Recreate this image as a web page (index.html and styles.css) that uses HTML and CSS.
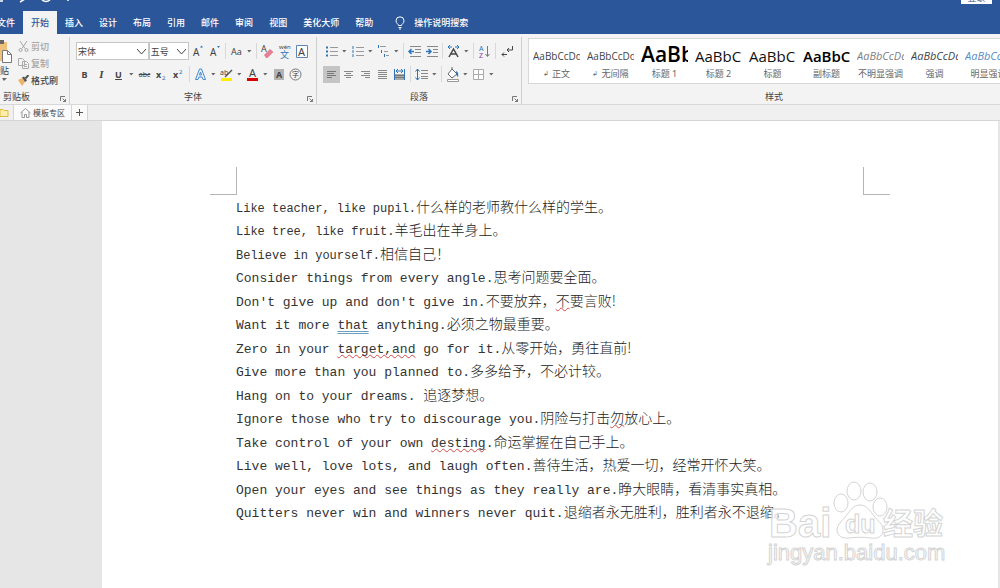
FILE: index.html
```
<!DOCTYPE html>
<html lang="zh-CN">
<head>
    <meta charset="UTF-8">
    <meta name="viewport" content="width=device-width, initial-scale=1.0">
    <title>Word</title>
    <link rel="stylesheet" href="styles.css">
</head>
<body>
    <header class="header">
        <div class="title-bar">
            <svg width="80" height="4" viewBox="0 0 80 4" fill="none" stroke="#fff" stroke-width="2">
                <path d="M0 1h3M20 2l5-3M42 0q4 3 8 0M67 0h2" stroke-width="1.500"/>
            </svg>
            <button class="login">登录</button>
        </div>
        <nav class="tabs">
            <button class="tab">文件</button>
            <button class="tab active">开始</button>
            <button class="tab">插入</button>
            <button class="tab">设计</button>
            <button class="tab">布局</button>
            <button class="tab">引用</button>
            <button class="tab">邮件</button>
            <button class="tab">审阅</button>
            <button class="tab">视图</button>
            <button class="tab">美化大师</button>
            <button class="tab">帮助</button>
            <button class="tab tell-me">
                <svg width="10" height="14" viewBox="0 0 10 14" fill="none" stroke="#fff"><path d="M3.500 9.500C3.500 8 1 7.500 1 4.800a4 4 0 0 1 8 0C9 7.500 6.500 8 6.500 9.500zM3.500 11.500h3M4 13h2"/></svg>
                操作说明搜索
            </button>
        </nav>
    </header>

    <div class="ribbon">
        <section class="group clipboard">
            <div class="clip-body">
                <button class="paste">
                    <svg width="14" height="24" viewBox="0 0 14 24"><path d="M0 2h7v19H0z" fill="#eec27b"/><path d="M0 0h4v4H0z" fill="#666"/><path d="M2.500 10.500h5l4 4v8h-9z" fill="#fff" stroke="#777"/><path d="M7.500 10.500v4h4" fill="none" stroke="#777"/></svg>
                    <span>贴</span>
                    <i class="caret"></i>
                </button>
                <div class="clip-list">
                    <button class="clip off"><svg width="11" height="11" viewBox="0 0 11 11" fill="none" stroke="#a5a5a5"><path d="M2 0l5 7.500M9 0L4 7.500"/><circle cx="2.500" cy="9" r="1.500"/><circle cx="8.500" cy="9" r="1.500"/></svg>剪切</button>
                    <button class="clip off"><svg width="11" height="11" viewBox="0 0 11 11" fill="#f3f3f3" stroke="#aaa"><path d="M.5.5h4l2 2v5h-6zM4.500 3.500h4l2 2v5h-6zM6 6.500h3M6 8.500h3"/></svg>复制</button>
                    <button class="clip"><svg width="11" height="11" viewBox="0 0 11 11"><path d="M0 5l4-2 3 4-3 4z" fill="#eeb468"/><path d="M4 2.500l2-1 3 4-2 1.500z" fill="#555"/><path d="M7.500 3.500L10.500 0" stroke="#555" stroke-width="2"/></svg>格式刷</button>
                </div>
            </div>
            <div class="group-title">剪贴板<svg class="launcher" width="6" height="6" viewBox="0 0 6 6"><path d="M.5 5V.5H5M2.500 2.500l3 3M5.500 3v2.500H3" fill="none" stroke="#777"/></svg></div>
        </section>

        <section class="group font">
            <div class="row">
                <select class="family" aria-label="字体"><option>宋体</option></select>
                <select class="size" aria-label="字号"><option>五号</option></select>
                <button class="tool" aria-label="增大字号"><svg width="17" height="17" viewBox="0 0 17 17"><text x="4" y="13" class="ico mid">A</text><path d="M11 4.500l1.500-2 1.500 2z" fill="#2e75b6"/></svg></button>
                <button class="tool" aria-label="减小字号"><svg width="17" height="17" viewBox="0 0 17 17"><text x="4" y="13" class="ico mid">A</text><path d="M11 3h3l-1.500 2z" fill="#2e75b6"/></svg></button>
                <i class="sep"></i>
                <button class="tool">Aa</button><i class="caret"></i>
                <i class="sep"></i>
                <button class="tool" aria-label="清除格式"><svg width="17" height="17" viewBox="0 0 17 17"><text x="2" y="9" class="ico">A</text><path d="M5 12l6-6 3.500 3-6 6H7z" fill="#e78192"/></svg></button>
                <button class="tool" aria-label="拼音"><svg width="17" height="17" viewBox="0 0 17 17"><text x="3" y="6" class="ico tiny">wén</text><text x="4" y="15" class="ico blue">文</text></svg></button>
                <button class="tool" aria-label="字符边框"><svg width="17" height="17" viewBox="0 0 17 17"><path d="M3.500 2.500h11v12h-11z" fill="#fff" stroke="#5b86b5"/><text x="5" y="13" class="ico big">A</text></svg></button>
            </div>
            <div class="row">
                <button class="tool"><b>B</b></button>
                <button class="tool serif"><i>I</i></button>
                <button class="tool"><b><u>U</u></b></button><i class="caret"></i>
                <button class="tool strike"><s>abc</s></button>
                <button class="tool"><svg width="17" height="17" viewBox="0 0 17 17"><text x="3" y="12" class="ico bold">x</text><text x="9" y="14" class="ico tiny blue">2</text></svg></button>
                <button class="tool"><svg width="17" height="17" viewBox="0 0 17 17"><text x="3" y="12" class="ico bold">x</text><text x="9" y="8" class="ico tiny blue">2</text></svg></button>
                <i class="sep"></i>
                <button class="tool"><svg width="17" height="17" viewBox="0 0 17 17"><path d="M3.500 13.500L7.500 3h2l4 10.500H11L10 11H7l-1 2.500zM7.500 9h2l-1-3z" fill="#e4f0fa" stroke="#4a8bc8"/></svg></button><i class="caret"></i>
                <button class="tool"><svg width="17" height="17" viewBox="0 0 17 17"><text x="2" y="9" class="ico small">ab</text><path d="M14 4L7 11" stroke="#555" stroke-width="1.500"/><path d="M3 12h11v3H3z" fill="#ffec00"/></svg></button><i class="caret"></i>
                <button class="tool"><svg width="17" height="17" viewBox="0 0 17 17"><text x="5" y="11" class="ico big">A</text><path d="M3 12h11v3H3z" fill="#d80000"/></svg></button><i class="caret"></i>
                <button class="tool"><svg width="17" height="17" viewBox="0 0 17 17"><path d="M4 3h10v11H4z" fill="#b3b3b3"/><text x="6" y="12" class="ico bold">A</text></svg></button>
                <button class="tool"><svg width="17" height="17" viewBox="0 0 17 17"><circle cx="8.500" cy="8.500" r="5.500" fill="none" stroke="#777"/><text x="5" y="11" class="ico small">字</text></svg></button>
            </div>
            <div class="group-title">字体<svg class="launcher" width="6" height="6" viewBox="0 0 6 6"><path d="M.5 5V.5H5M2.500 2.500l3 3M5.500 3v2.500H3" fill="none" stroke="#777"/></svg></div>
        </section>

        <section class="group paragraph">
            <div class="row">
                <button class="tool"><svg width="17" height="17" viewBox="0 0 17 17"><path d="M7 4.500h8M7 8.500h8M7 12.500h8" stroke="#999"/><path d="M3 4.500h2M3 8.500h2M3 12.500h2" stroke="#2e75b6" stroke-width="2"/></svg></button><i class="caret"></i>
                <button class="tool"><svg width="17" height="17" viewBox="0 0 17 17"><path d="M7 4.500h8M7 8.500h8M7 12.500h8" stroke="#999"/><path d="M4 3v3M4 7v3M4 11v3" stroke="#2e75b6"/></svg></button><i class="caret"></i>
                <button class="tool"><svg width="17" height="17" viewBox="0 0 17 17"><path d="M5 3.500h6M9 8.500h4M11 12.500h3" stroke="#999"/><path d="M3.500 2v3M6.500 7v3M9.500 11v3" stroke="#2e75b6"/></svg></button><i class="caret"></i>
                <i class="sep"></i>
                <button class="tool"><svg width="17" height="17" viewBox="0 0 17 17"><path d="M4 3.500h11M9 6.500h6M9 9.500h6M4 13.500h11" stroke="#888"/><path d="M8 8.500H3M5.500 6L3 8.500 5.500 11" fill="none" stroke="#2e75b6" stroke-width="1.500"/></svg></button>
                <button class="tool"><svg width="17" height="17" viewBox="0 0 17 17"><path d="M4 3.500h11M10 6.500h5M10 9.500h5M4 13.500h11" stroke="#888"/><path d="M3 8.500h5M5.500 6L8 8.500 5.500 11" fill="none" stroke="#2e75b6" stroke-width="1.500"/></svg></button>
                <i class="sep"></i>
                <button class="tool"><svg width="17" height="17" viewBox="0 0 17 17"><path d="M4 14l4.500-8 4.500 8M6 11h5" fill="none" stroke="#444" stroke-width="1.500"/><path d="M3 4h4M10 4h4M5 2L3 4l2 2M12 2l2 2-2 2" fill="none" stroke="#2e75b6"/></svg></button><i class="caret"></i>
                <i class="sep"></i>
                <button class="tool"><svg width="17" height="17" viewBox="0 0 17 17"><text x="3" y="8" class="ico small blue">A</text><text x="3" y="15" class="ico small purple">Z</text><path d="M11.500 3v10M9.500 11l2 2.500 2-2.500" fill="none" stroke="#777"/></svg></button>
                <i class="sep"></i>
                <button class="tool"><svg width="17" height="17" viewBox="0 0 17 17"><path d="M14.500 3v4H9M11 5L9 7l2 2M9 11.500H4M6 9.500l-2 2 2 2" fill="none" stroke="#444"/></svg></button>
            </div>
            <div class="row">
                <button class="tool on"><svg width="17" height="17" viewBox="0 0 17 17"><path d="M4 5.500h9M4 7.500h7M4 9.500h9M4 11.500h5" stroke="#777"/></svg></button>
                <button class="tool"><svg width="17" height="17" viewBox="0 0 17 17"><path d="M4 5.500h9M6 7.500h5M4 9.500h9M6 11.500h5" stroke="#888"/></svg></button>
                <button class="tool"><svg width="17" height="17" viewBox="0 0 17 17"><path d="M4 5.500h9M7 7.500h6M4 9.500h9M8 11.500h5" stroke="#888"/></svg></button>
                <button class="tool"><svg width="17" height="17" viewBox="0 0 17 17"><path d="M4 4.500h9M4 6.500h9M4 8.500h9M4 10.500h9M4 12.500h9" stroke="#888"/></svg></button>
                <button class="tool"><svg width="17" height="17" viewBox="0 0 17 17"><path d="M3.500 3v11M13.500 3v11M5 5h7M7 3L5 5l2 2M10 3l2 2-2 2" fill="none" stroke="#2e75b6"/><path d="M4 8h9v6H4z" fill="#aaa"/><path d="M4 9.500h9M4 11.500h9" stroke="#777"/></svg></button>
                <i class="sep"></i>
                <button class="tool"><svg width="17" height="17" viewBox="0 0 17 17"><path d="M8 4.500h7M8 7.500h7M8 10.500h7M8 12.500h7" stroke="#888"/><path d="M4.500 3v11M2.500 5.500l2-2.500 2 2.500M2.500 11.500l2 2.500 2-2.500" fill="none" stroke="#2e75b6"/></svg></button><i class="caret"></i>
                <i class="sep"></i>
                <button class="tool"><svg width="17" height="17" viewBox="0 0 17 17"><path d="M8 3L4 8l4 4 5-4zM8 3V1" fill="#fff" stroke="#666"/><path d="M12 5q3 1 2 6-2-1-2-6" fill="#2e75b6"/><path d="M3.500 13.500h11v2h-11z" fill="#fff" stroke="#999"/></svg></button><i class="caret"></i>
                <button class="tool"><svg width="17" height="17" viewBox="0 0 17 17"><path d="M3.500 3.500h10v10h-10zM8.500 3.500v10M3.500 8.500h10" fill="#fff" stroke="#aaa"/></svg></button><i class="caret"></i>
            </div>
            <div class="group-title">段落<svg class="launcher" width="6" height="6" viewBox="0 0 6 6"><path d="M.5 5V.5H5M2.500 2.500l3 3M5.500 3v2.500H3" fill="none" stroke="#777"/></svg></div>
        </section>

        <section class="group styles">
            <div class="gallery">
                <button class="style"><span class="preview">AaBbCcDd</span><span class="name"><small>↲</small> 正文</span></button>
                <button class="style"><span class="preview">AaBbCcDd</span><span class="name"><small>↲</small> 无间隔</span></button>
                <button class="style"><span class="preview h1">AaBb</span><span class="name">标题 1</span></button>
                <button class="style"><span class="preview h2">AaBbC</span><span class="name">标题 2</span></button>
                <button class="style"><span class="preview h2">AaBbC</span><span class="name">标题</span></button>
                <button class="style"><span class="preview h2 strong">AaBbC</span><span class="name">副标题</span></button>
                <button class="style"><span class="preview italic soft">AaBbCcDd</span><span class="name">不明显强调</span></button>
                <button class="style"><span class="preview italic">AaBbCcDd</span><span class="name">强调</span></button>
                <button class="style"><span class="preview italic accent">AaBbCcDd</span><span class="name">明显强调</span></button>
            </div>
            <div class="group-title">样式</div>
        </section>
    </div>

    <div class="doc-tabs">
        <button class="folder" aria-label="文件夹"><svg width="9" height="9" viewBox="0 0 9 9"><path d="M0 1.500h3l1 1h4v6H0z" fill="#fff0ad" stroke="#e2b93e"/></svg></button>
        <button class="doc-tab"><svg width="11" height="10" viewBox="0 0 11 10" fill="none" stroke="#999"><path d="M.5 5L5.500.5l5 4.500M2 4v5.500h2.500v-3h2v3H9V4"/></svg>模板专区</button>
        <button class="doc-add" aria-label="新建"><svg width="7" height="7" viewBox="0 0 7 7"><path d="M3.500 0v7M0 3.500h7" stroke="#555"/></svg></button>
    </div>

    <main class="workspace">
        <article class="page">
            <div class="corners"><i></i><i></i></div>
            <div class="text">
                <p class="tight">Like teacher, like pupil.<span>什么样的老师教什么样的学生。</span></p>
                <p class="tight">Like tree, like fruit.<span>羊毛出在羊身上。</span></p>
                <p class="tight">Believe in yourself.<span>相信自己！</span></p>
                <p>Consider things from every angle.<span>思考问题要全面。</span></p>
                <p>Don't give up and don't give in.<span>不要放弃，<u class="spell">不</u>要言败!</span></p>
                <p>Want it more <u class="grammar">that</u> anything.<span>必须之物最重要。</span></p>
                <p>Zero in your <u class="spell">target,and</u> go for it.<span>从零开始，勇往直前!</span></p>
                <p>Give more than you planned to.<span>多多给予，不必计较。</span></p>
                <p>Hang on to your dreams. <span>追逐梦想。</span></p>
                <p>Ignore those who try to discourage you.<span>阴险与打击<u class="spell">勿</u>放心上。</span></p>
                <p>Take control of your own <u class="spell">desting</u>.<span>命运掌握在自己手上。</span></p>
                <p>Live well, love lots, and laugh often.<span>善待生活，热爱一切，经常开怀大笑。</span></p>
                <p>Open your eyes and see things as they really are.<span>睁大眼睛，看清事实真相。</span></p>
                <p>Quitters never win and winners never quit.<span>退缩者永无胜利，胜利者永不退缩。</span></p>
            </div>
        </article>
        <svg class="watermark" width="184" height="90" viewBox="0 0 184 90">
            <text x="3" y="57" class="wm-logo">Bai</text>
            <ellipse cx="75" cy="23" rx="7" ry="9"/>
            <ellipse cx="88" cy="11" rx="7" ry="9"/>
            <ellipse cx="104" cy="12" rx="7" ry="9"/>
            <ellipse cx="114" cy="27" rx="7" ry="9"/>
            <path d="M94 25c7 0 10 6 14 11s9 8 9 14c0 7-6 9-12 8s-16-1-22 0-12-2-12-8c0-5 5-9 9-14s7-11 14-11z"/>
            <text x="79" y="53" class="wm-du">du</text>
            <text x="117" y="54" class="wm-cn">经验</text>
            <text x="2" y="80" class="wm-url">jingyan.baidu.com</text>
        </svg>
    </main>
</body>
</html>
```
FILE: styles.css
```
* {
    box-sizing: border-box;
}
body {
    margin: 0;
    min-height: 100vh;
    display: flex;
    flex-direction: column;
    font-family: "Noto Sans", "Noto Sans CJK SC", sans-serif;
    font-size: 9px;
    color: #444;
    background-color: #e6e6e6;
    overflow: hidden;
}
button {
    margin: 0;
    padding: 0;
    border: none;
    background: none;
    font: inherit;
    color: inherit;
    white-space: nowrap;
}
svg {
    display: block;
    flex: none;
}

/* Header */
.header {
    background-color: #2b579a;
    color: #fff;
}
.title-bar {
    display: flex;
    justify-content: space-between;
    align-items: flex-start;
    height: 11px;
    padding-right: 8px;
    overflow: hidden;
}
.login {
    width: 31px;
    height: 12px;
    margin-top: -8px;
    line-height: 10px;
    color: #2b579a;
    background-color: #fff;
}
.tabs {
    display: flex;
    margin-left: -11px;
}
.tab {
    height: 23px;
    padding: 0 8px;
    font-weight: 500;
}
.tab.active {
    color: #2b579a;
    background-color: #f3f3f3;
}
.tell-me {
    display: flex;
    align-items: center;
    gap: 9px;
    margin-left: 6px;
}

/* Ribbon */
.ribbon {
    display: flex;
    height: 71px;
    background-color: #f3f3f3;
    border-bottom: 1px solid #d8d8d8;
    overflow: hidden;
}
.group {
    position: relative;
    flex: none;
    display: flex;
    flex-direction: column;
    margin-top: 3px;
    padding: 5px 6px 1px;
    border-right: 1px solid #cfcfcf;
}
.clipboard {
    width: 70px;
    padding: 1px 0;
}
.font {
    width: 247px;
}
.paragraph {
    width: 205px;
}
.styles {
    width: 505px;
    padding-top: 1px;
}
.group-title {
    margin-top: auto;
    line-height: 12px;
    text-align: center;
}
.clipboard .group-title {
    padding-left: 3px;
    text-align: left;
}
.launcher {
    position: absolute;
    right: 3px;
    bottom: 2px;
}
.clip-body {
    display: flex;
    gap: 4px;
}
.paste {
    width: 14px;
    display: flex;
    flex-direction: column;
    align-items: flex-start;
    padding-top: 2px;
}
.paste span {
    line-height: 14px;
}
.clip-list {
    display: flex;
    flex-direction: column;
}
.clip {
    display: flex;
    align-items: center;
    gap: 2px;
    height: 17px;
    font-weight: 500;
}
.clip.off {
    color: #a5a5a5;
}
.row {
    display: flex;
    align-items: center;
    height: 18px;
    margin-bottom: 5px;
}
.row select {
    height: 18px;
    padding: 0 1px;
    font: inherit;
    color: #444;
    border: 1px solid #c6c6c6;
    border-radius: 0;
    appearance: none;
    background: #fff url("data:image/svg+xml,%3Csvg xmlns='http://www.w3.org/2000/svg' width='11' height='7'%3E%3Cpath d='M1 1l4.500 5L10 1' fill='none' stroke='%23444'/%3E%3C/svg%3E") no-repeat right 1px center;
}
.row .family {
    width: 74px;
}
.row .size {
    width: 41px;
}
.tool {
    flex: none;
    width: 17px;
    height: 17px;
    line-height: 17px;
    text-align: center;
}
.tool.on {
    background-color: #c5c5c5;
}
.tool.serif {
    font-family: "Liberation Serif", serif;
    font-size: 11px;
    font-weight: bold;
}
.tool.strike {
    font-size: 7px;
}
.caret {
    flex: none;
    width: 9px;
    height: 3px;
    background-color: #666;
    clip-path: polygon(2px 0, 7px 0, 4px 3px);
}
.sep {
    flex: none;
    width: 5px;
    height: 16px;
    background: linear-gradient(#d8d8d8, #d8d8d8) center / 1px 100% no-repeat;
}
.ico {
    font-size: 9px;
    fill: #444;
}
.ico.mid {
    font-size: 10px;
}
.ico.big {
    font-size: 11px;
}
.ico.small {
    font-size: 7px;
}
.ico.tiny {
    font-size: 6px;
}
.ico.bold {
    font-weight: bold;
}
.ico.blue {
    fill: #2e75b6;
}
.ico.purple {
    fill: #8a3fa0;
}

/* Style gallery */
.gallery {
    display: flex;
    height: 46px;
    margin-right: -7px;
    border: 1px solid #d8d8d8;
    background-color: #fff;
}
.style {
    flex: none;
    width: 54px;
    padding: 0 3px 0 4px;
}
.preview {
    display: block;
    height: 26px;
    line-height: 28px;
    font-family: "Open Sans", sans-serif;
    font-size: 10px;
    text-align: left;
    overflow: hidden;
}
.preview.h1 {
    font-size: 21px;
    font-weight: 600;
    line-height: 25px;
    color: #000;
}
.preview.h2 {
    font-size: 15px;
    color: #111;
}
.preview.strong {
    font-weight: 600;
    color: #000;
}
.preview.italic {
    font-size: 11px;
    font-style: italic;
}
.preview.soft {
    color: #808080;
}
.preview.accent {
    color: #5b8cc5;
}
.name {
    display: flex;
    justify-content: center;
    gap: 3px;
    line-height: 12px;
    color: #666;
}
.name small {
    font-size: 7px;
}

/* Document tabs */
.doc-tabs {
    display: flex;
    height: 16px;
    background-color: #f0f0f0;
    border-bottom: 1px solid #d5d5d5;
}
.folder {
    width: 14px;
    border-right: 1px solid #d5d5d5;
}
.doc-tab {
    display: flex;
    align-items: center;
    gap: 2px;
    padding: 0 6px;
    font-size: 8px;
    background-color: #fafafa;
    border-right: 1px solid #d5d5d5;
}
.doc-add {
    display: flex;
    align-items: center;
    padding: 0 4px;
    background-color: #fafafa;
    border-right: 1px solid #d5d5d5;
}

/* Page */
.workspace {
    position: relative;
    flex: 1;
    display: flex;
    padding: 0 2px 0 102px;
}
.page {
    flex: 1;
    padding: 46px 108px 0;
    background-color: #fff;
}
.corners {
    display: flex;
    justify-content: space-between;
}
.corners i {
    width: 27px;
    height: 28px;
    border: solid #b5b5b5;
    border-width: 0 1px 1px 0;
}
.corners i:last-child {
    border-width: 0 0 1px 1px;
}
.text {
    padding-left: 26px;
    font-family: "Liberation Mono", "Noto Sans CJK SC", monospace;
    font-size: 13px;
    color: #333;
}
.text p {
    height: 23px;
    margin: 0;
    line-height: 23px;
    white-space: pre;
}
.text p:nth-child(even) {
    height: 24px;
}
.text .tight {
    font-size: 12px;
}
.text span {
    font-family: "Noto Sans CJK SC", sans-serif;
    font-size: 14px;
    font-weight: 300;
    color: #222;
}
.spell {
    text-decoration: underline wavy #d04a4a 1px;
    text-decoration-skip-ink: none;
    text-underline-offset: 1px;
}
.grammar {
    text-decoration: underline double #6f9fc0 1px;
    text-underline-offset: 2px;
}

.watermark {
    position: absolute;
    right: 50px;
    bottom: 18px;
    fill: rgba(255, 255, 255, 0.7);
    stroke: #d4d4d4;
    font-family: "Liberation Sans", "Noto Sans CJK SC", sans-serif;
}
.wm-logo {
    font-size: 40px;
    font-weight: bold;
}
.wm-du {
    font-size: 25px;
    font-weight: bold;
}
.wm-cn {
    font-size: 30px;
    font-weight: bold;
}
.wm-url {
    font-size: 22px;
}
```
